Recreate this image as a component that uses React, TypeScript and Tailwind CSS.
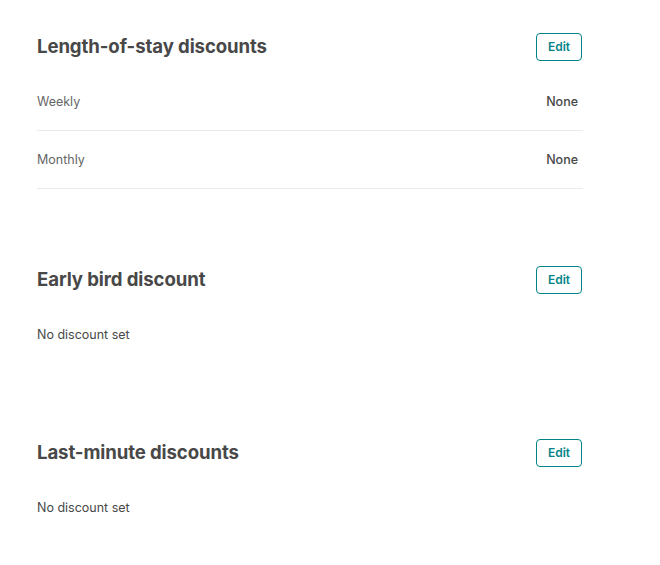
import React from "react";

function EditButton() {
  return (
    <button className="h-[28px] w-[46px] rounded-[4px] border border-[#008489] text-[12px] font-semibold text-[#008489] bg-white leading-none">
      Edit
    </button>
  );
}

function Header({ title }: { title: string }) {
  return (
    <div className="flex h-[28px] items-center justify-between">
      <h2 className="text-[18.6px] font-bold text-[#484848] tracking-[-0.1px]">{title}</h2>
      <div className="pr-[1px]">
        <EditButton />
      </div>
    </div>
  );
}

function Row({ label, value }: { label: string; value: string }) {
  return (
    <div className="flex h-[58px] items-center justify-between border-b border-[#ebebeb] pt-[1px]">
      <span className="text-[12.5px] text-[#666666]">{label}</span>
      <span className="pr-[5px] text-[12.5px] font-medium text-[#484848]">{value}</span>
    </div>
  );
}

export default function App() {
  return (
    <div
      className="min-h-[565px] w-[660px] bg-white"
      style={{ fontFamily: "Inter, 'Noto Sans', sans-serif" }}
    >
      <div className="w-[583px] pl-[37px] pt-[33px]">
        <section>
          <Header title="Length-of-stay discounts" />
          <div className="mt-[12px]">
            <Row label="Weekly" value="None" />
            <Row label="Monthly" value="None" />
          </div>
        </section>
        <section className="mt-[77px]">
          <Header title="Early bird discount" />
          <p className="mt-[31px] h-[20px] leading-[20px] text-[12.5px] text-[#484848]">No discount set</p>
        </section>
        <section className="mt-[94px]">
          <Header title="Last-minute discounts" />
          <p className="mt-[31px] h-[20px] leading-[20px] text-[12.5px] text-[#484848]">No discount set</p>
        </section>
      </div>
    </div>
  );
}
